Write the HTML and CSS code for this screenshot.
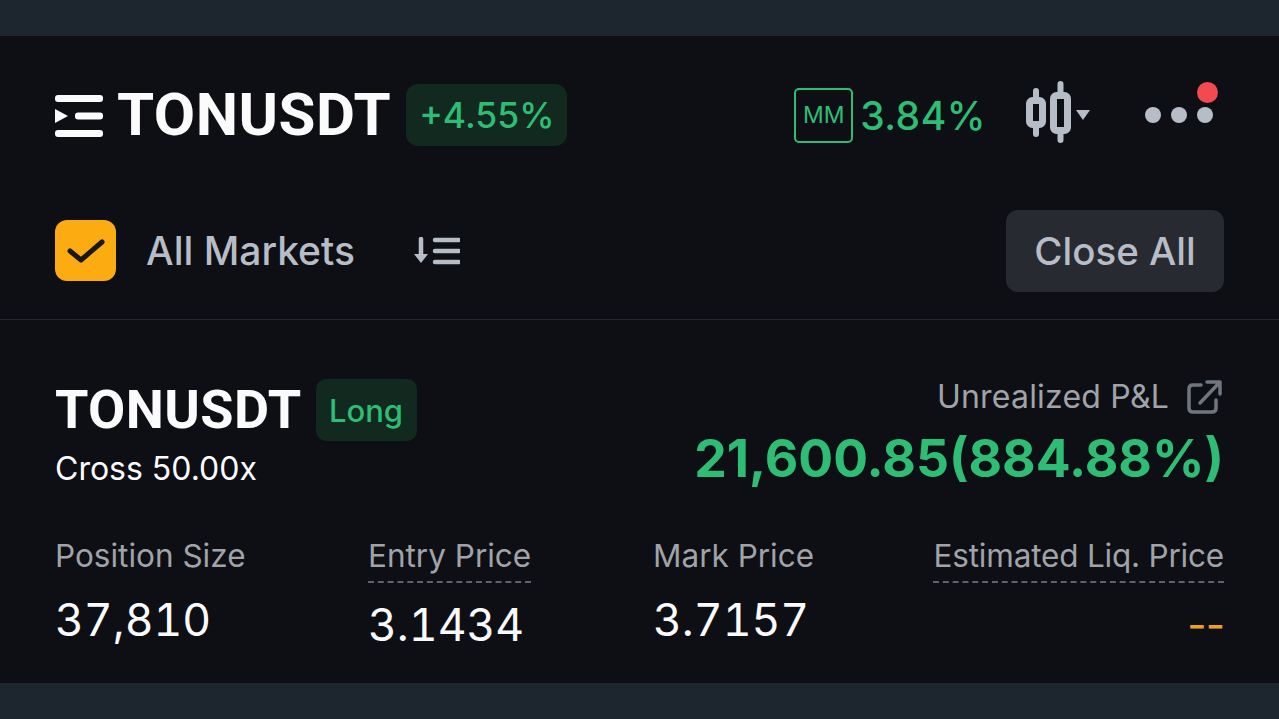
FILE: index.html
```html
<!DOCTYPE html>
<html lang="en">
<head>
    <meta charset="UTF-8">
    <meta name="viewport" content="width=device-width, initial-scale=1.0">
    <title>TONUSDT Position</title>
    <link rel="stylesheet" href="styles.css">
</head>
<body>
    <div class="panel">
        <header class="top-bar">
            <div class="symbol-group">
                <svg class="menu-icon" width="48" height="42" viewBox="0 0 48 42" fill="#fbfbfd">
                    <rect x="0" y="0" width="48" height="7" rx="3"/>
                    <rect x="20" y="17.500" width="28" height="7" rx="3"/>
                    <rect x="0" y="35" width="48" height="7" rx="3"/>
                    <path d="M0 14 L13 21 L0 28 Z"/>
                </svg>
                <h1 class="symbol">TONUSDT</h1>
                <span class="change-badge">+4.55%</span>
            </div>
            <div class="top-actions">
                <div class="mm-group">
                    <span class="mm-box">MM</span>
                    <span class="mm-value">3.84%</span>
                </div>
                <svg class="candle-icon" width="64" height="62" viewBox="0 0 64 62" fill="none" stroke="#b7bdc6">
                    <path d="M10 10 V16 M10 47 V53 M34.500 3 V11 M34.500 53 V59" stroke-width="6" stroke-linecap="round"/>
                    <rect x="3.500" y="19.500" width="13" height="24" rx="3" stroke-width="7"/>
                    <rect x="27.500" y="14.500" width="14" height="35" rx="3" stroke-width="7"/>
                    <path d="M50 29 H64 L57 39 Z" fill="#b7bdc6" stroke="none"/>
                </svg>
                <div class="more-menu">
                    <span class="dot"></span>
                    <span class="dot"></span>
                    <span class="dot"></span>
                    <span class="notice-dot"></span>
                </div>
            </div>
        </header>

        <div class="toolbar">
            <div class="filter-group">
                <span class="checkbox">
                    <svg width="40" height="30" viewBox="0 0 40 30" fill="none" stroke="#1a1712" stroke-width="5" stroke-linecap="round" stroke-linejoin="round">
                        <path d="M4 15 L15 24 L36 6"/>
                    </svg>
                </span>
                <span class="filter-label">All Markets</span>
                <svg class="sort-icon" width="46" height="28" viewBox="0 0 46 28" fill="none" stroke="#b7bdc6" stroke-width="4.500" stroke-linecap="round">
                    <path d="M7 2 V20"/>
                    <path d="M0 17 H14 L7 26 Z" fill="#b7bdc6" stroke="none"/>
                    <path d="M21 3 H45 M21 14 H45 M21 25 H45"/>
                </svg>
            </div>
            <button type="button" class="close-all">Close All</button>
        </div>

        <section class="position">
            <div class="position-head">
                <div>
                    <div class="position-title">
                        <h2 class="position-symbol">TONUSDT</h2>
                        <span class="side-badge">Long</span>
                    </div>
                    <div class="margin-mode">Cross 50.00x</div>
                </div>
                <div class="pnl">
                    <div class="pnl-label">
                        Unrealized P&amp;L
                        <svg class="share-icon" width="36" height="36" viewBox="0 0 36 36" fill="none" stroke="#6f7680" stroke-width="3.500" stroke-linecap="round" stroke-linejoin="round">
                            <path d="M14 6 H6 Q2 6 2 10 V29 Q2 33 6 33 H25 Q29 33 29 29 V21"/>
                            <path d="M13 24 L33 3 M20 3 H33 V15"/>
                        </svg>
                    </div>
                    <div class="pnl-value">21,600.85(884.88%)</div>
                </div>
            </div>

            <div class="stats">
                <div class="stat">
                    <div class="stat-label">Position Size</div>
                    <div class="stat-value">37,810</div>
                </div>
                <div class="stat">
                    <div class="stat-label dashed">Entry Price</div>
                    <div class="stat-value">3.1434</div>
                </div>
                <div class="stat">
                    <div class="stat-label">Mark Price</div>
                    <div class="stat-value">3.7157</div>
                </div>
                <div class="stat-right">
                    <div class="stat-label dashed">Estimated Liq. Price</div>
                    <div class="stat-value empty">--</div>
                </div>
            </div>
        </section>
    </div>
</body>
</html>
```

FILE: styles.css
```css
* {
    margin: 0;
    padding: 0;
    box-sizing: border-box;
    font-family: 'Inter', 'Liberation Sans', sans-serif;
}

body {
    height: 719px;
    overflow: hidden;
    background: #1d252e;
    padding-top: 36px;
}

.panel {
    height: 647px;
    background: #0e0f14;
    color: #fbfbfd;
}

.top-bar {
    height: 158px;
    padding: 0 55px;
    display: flex;
    justify-content: space-between;
    align-items: center;
}

.symbol-group {
    display: flex;
    align-items: center;
}

.menu-icon {
    margin-top: 2px;
    margin-right: 14px;
}

.symbol {
    font-family: 'Roboto', sans-serif;
    font-size: 60px;
    font-weight: 700;
    line-height: 60px;
    letter-spacing: 0.5px;
    margin-right: 15px;
}

.change-badge {
    width: 161px;
    height: 62px;
    border-radius: 12px;
    background: #11291f;
    color: #2ebd75;
    font-size: 35.500px;
    font-weight: 500;
    display: flex;
    align-items: center;
    justify-content: center;
}

.top-actions {
    display: flex;
    align-items: center;
}

.mm-group {
    display: flex;
    align-items: center;
    margin-right: 40px;
}

.mm-box {
    width: 59px;
    height: 55px;
    border: 2.500px solid #2ebd75;
    border-radius: 5px;
    color: #2ebd75;
    font-size: 23px;
    display: flex;
    align-items: center;
    justify-content: center;
    margin-right: 7px;
}

.mm-value {
    color: #2ebd75;
    font-size: 39px;
    font-weight: 500;
    letter-spacing: 0.5px;
}

.candle-icon {
    margin-right: 55px;
    margin-bottom: 6px;
}

.more-menu {
    position: relative;
    display: flex;
    gap: 10px;
    margin-right: 11px;
}

.dot {
    width: 16px;
    height: 16px;
    border-radius: 50%;
    background: #b7bdc6;
}

.notice-dot {
    position: absolute;
    top: -25px;
    right: -5px;
    width: 21px;
    height: 21px;
    border-radius: 50%;
    background: #f24a4f;
}

.toolbar {
    height: 126px;
    padding: 0 55px 12px;
    border-bottom: 1px solid #23262c;
    display: flex;
    justify-content: space-between;
    align-items: center;
}

.filter-group {
    display: flex;
    align-items: center;
}

.checkbox {
    width: 61px;
    height: 61px;
    border-radius: 12px;
    background: #fcab10;
    display: flex;
    align-items: center;
    justify-content: center;
    margin-right: 30px;
}

.filter-label {
    color: #b7bdc6;
    font-size: 39px;
    font-weight: 500;
    margin-right: 59px;
}

.close-all {
    width: 218px;
    height: 82px;
    border: none;
    border-radius: 12px;
    background: #272a30;
    color: #b7bdc6;
    font-size: 38.500px;
    font-weight: 500;
}

.position {
    padding: 59px 55px 0;
}

.position-head {
    display: flex;
    justify-content: space-between;
    align-items: flex-start;
}

.position-title {
    display: flex;
    align-items: center;
}

.position-symbol {
    font-family: 'Roboto', sans-serif;
    font-size: 54px;
    font-weight: 700;
    line-height: 62px;
    letter-spacing: 0.4px;
    margin-right: 14px;
}

.side-badge {
    width: 101px;
    height: 62px;
    border-radius: 10px;
    background: #11291f;
    color: #2ebd75;
    font-size: 31px;
    font-weight: 500;
    display: flex;
    align-items: center;
    justify-content: center;
}

.margin-mode {
    font-size: 32px;
    line-height: 40px;
    margin-top: 8px;
}

.pnl {
    text-align: right;
    margin-top: -1px;
}

.pnl-label {
    color: #a0a3a8;
    font-size: 32px;
    letter-spacing: 0.2px;
    line-height: 38px;
    display: flex;
    align-items: center;
    justify-content: flex-end;
    gap: 18px;
}

.share-icon {
    margin-right: 1px;
}

.pnl-value {
    color: #2ebd75;
    font-size: 51.700px;
    font-weight: 700;
    line-height: 60px;
    margin-top: 12px;
}

.stats {
    display: grid;
    grid-template-columns: 313px 285px 280px 1fr;
    margin-top: 45px;
}

.stat {
    width: fit-content;
}

.stat-label {
    color: #a0a3a8;
    font-size: 31.500px;
    line-height: 44px;
    white-space: nowrap;
}

.dashed {
    padding-bottom: 3px;
    border-bottom: 2px dashed #5e636b;
}

.stat-value {
    font-size: 44.500px;
    font-variant-numeric: tabular-nums;
    line-height: 56px;
    margin-top: 14px;
}

.stat-right {
    text-align: right;
}

.stat-right .stat-label {
    letter-spacing: -0.2px;
}

.empty {
    color: #f0a020;
    font-size: 42px;
    font-variant-numeric: normal;
    letter-spacing: -1px;
}
```
